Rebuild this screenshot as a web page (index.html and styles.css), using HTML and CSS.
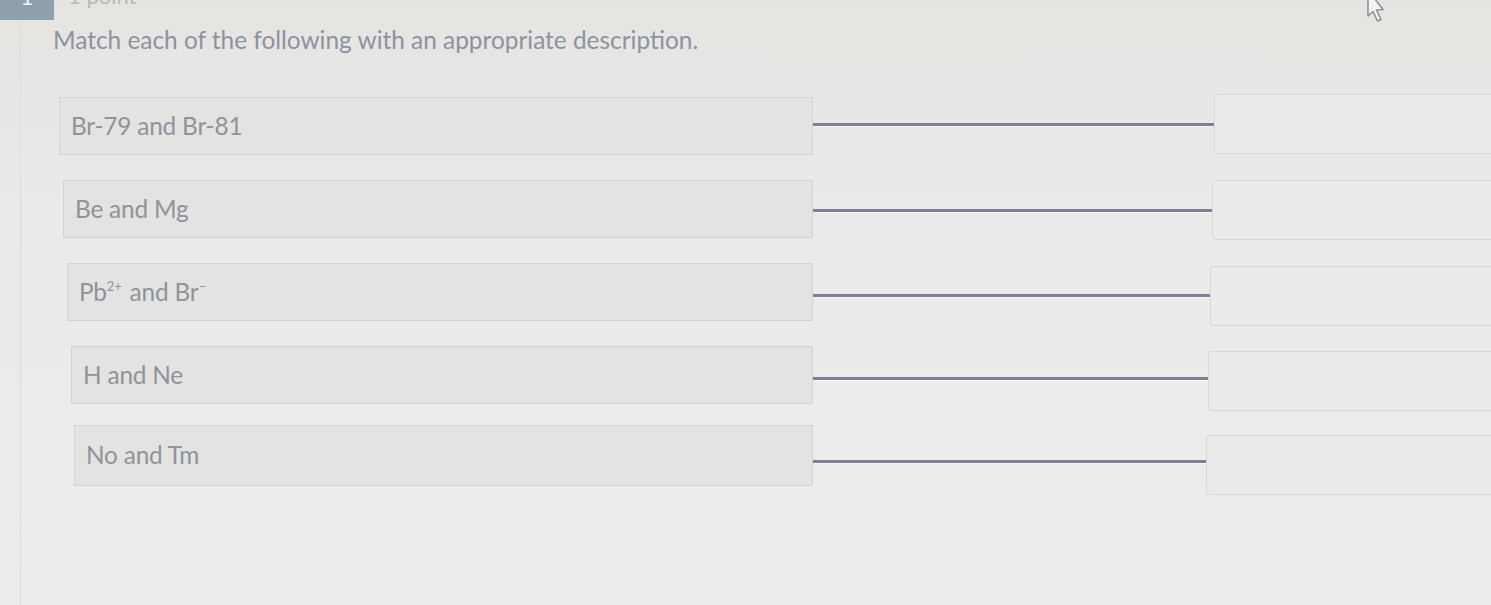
FILE: index.html
```html
<!DOCTYPE html>
<html>
<head>
<meta charset="utf-8">
<link rel="stylesheet" href="styles.css">
</head>
<body>
<div class="page">
  <div class="top">
    <div class="badge"><span>1</span></div>
    <div class="points">1 point</div>
  </div>
  <div class="panel">
    <h1 class="question">Match each of the following with an appropriate description.</h1>
    <div class="rows">
      <div class="row r1">
        <div class="item"><span>Br-79 and Br-81</span></div>
        <div class="link"><span class="wire"></span></div>
        <div class="slot"></div>
      </div>
      <div class="row r2">
        <div class="item"><span>Be and Mg</span></div>
        <div class="link"><span class="wire"></span></div>
        <div class="slot"></div>
      </div>
      <div class="row r3">
        <div class="item"><span>Pb<sup>2+</sup> and Br<sup>−</sup></span></div>
        <div class="link"><span class="wire"></span></div>
        <div class="slot"></div>
      </div>
      <div class="row r4">
        <div class="item"><span>H and Ne</span></div>
        <div class="link"><span class="wire"></span></div>
        <div class="slot"></div>
      </div>
      <div class="row r5">
        <div class="item"><span>No and Tm</span></div>
        <div class="link"><span class="wire"></span></div>
        <div class="slot"></div>
      </div>
    </div>
  </div>
  <svg class="cursor" width="30" height="26" viewBox="0 0 30 26">
    <path d="M12 -10 L12 16 L17 11.5 L21.5 21 L25 19.5 L20.5 10 L27 9.5 Z" fill="#f3f3f3" stroke="#8c8e94" stroke-width="1.5" stroke-linejoin="round"/>
  </svg>
</div>
</body>
</html>
```

FILE: styles.css
```css
html, body {
  margin: 0;
  padding: 0;
  height: 100%;
  overflow: hidden;
}
body {
  background: linear-gradient(180deg, #e5e4e1 0%, #eaeae9 35%, #ecedec 100%);
  font-family: Lato, "Open Sans", sans-serif;
}
.page {
  position: relative;
  width: 1491px;
  height: 605px;
  overflow: hidden;
}
.top {
  height: 20px;
  display: flex;
  align-items: flex-end;
  gap: 14px;
  overflow: hidden;
}
.badge {
  width: 54px;
  height: 40px;
  background: #8fa0ad;
  color: #f4f6f8;
  font-size: 22px;
  display: flex;
  justify-content: center;
  align-items: flex-end;
  line-height: 1;
  box-sizing: border-box;
}
.badge span { margin-bottom: 12px; }
.points {
  color: #b9b9b6;
  font-size: 22px;
  line-height: 1;
  margin-bottom: 13px;
}
.panel {
  margin-left: 20px;
  border-left: 1px solid #dcdcda;
  height: 585px;
  box-sizing: border-box;
  padding-top: 5px;
}
.question {
  margin: 0 0 0 32px;
  font-weight: 400;
  font-size: 24.4px;
  line-height: 30px;
  color: #8d92a0;
}
.rows {
  margin-top: 42px;
  margin-left: -20px;
  display: flex;
  flex-direction: column;
  gap: 25px;
}
.row {
  display: grid;
  grid-template-columns: 1fr var(--cw, 400px) 300px;
  grid-template-rows: 58px;
  width: calc(812px + var(--cw, 400px) + 300px);
  height: 58px;
  box-sizing: border-box;
}
.item {
  background: #e3e3e1;
  border: 1px solid #d3d3d1;
  color: #90939b;
  font-size: 24.4px;
  display: flex;
  align-items: center;
  padding-left: 11px;
  letter-spacing: -0.2px;
}
.item span { line-height: 1; }
.item sup {
  font-size: 13px;
  line-height: 0;
  vertical-align: 0;
  position: relative;
  top: -10px;
  margin-right: 2px;
}
.item sup:last-child { margin-right: 0; }
.link {
  display: flex;
  align-items: center;
}
.wire {
  display: block;
  width: 100%;
  height: 3px;
  background: #7d8097;
  box-shadow: 0 1px 0 #f5f5f7;
}
.slot {
  border: 1px solid #d8d8d6;
  border-radius: 3px;
  background: #eaebea;
  margin-top: -3px;
  height: 60px;
  box-sizing: border-box;
}
.r1 { padding-left: 58px; --cw: 401px; }
.r1 .link { padding-bottom: 4px; }
.r2 { padding-left: 62px; --cw: 399px; }
.r2 .slot { margin-top: 0; }
.r2 .link { padding-top: 2px; }
.r3 { padding-left: 66px; --cw: 397px; }
.r3 .slot { margin-top: 3px; }
.r3 .link { padding-top: 6px; }
.r4 { padding-left: 70px; --cw: 395px; }
.r4 .slot { margin-top: 5px; }
.r4 .link { padding-top: 6px; }
.r5 { padding-left: 73px; --cw: 393px; margin-top: -4px; grid-template-rows: 61px; height: 61px; }
.r5 .slot { margin-top: 10px; }
.r5 .link { padding-top: 12px; }
.cursor {
  position: absolute;
  left: 1356px;
  top: 0;
}
```
